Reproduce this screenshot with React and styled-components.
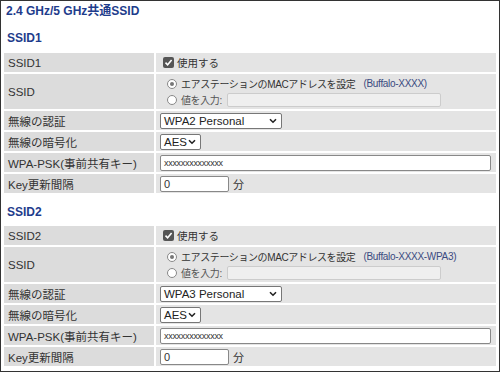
import styled, { createGlobalStyle } from "styled-components";

const Global = createGlobalStyle`
  html, body { margin: 0; padding: 0; background: #fff; }
  body {
    font-family: "Liberation Sans", Arial, "Noto Sans CJK JP", sans-serif;
    font-size: 11px;
    color: #333;
  }
`;

const Frame = styled.div`
  width: 500px;
  height: 372px;
  box-sizing: border-box;
  border: 1px solid #333;
  padding: 0 1px 0 3px;
  overflow: hidden;
`;

const Title = styled.h2`
  margin: 0;
  padding: 3px 0 0 2px;
  height: 24px;
  box-sizing: border-box;
  font-size: 12px;
  line-height: 15px;
  font-weight: bold;
  color: #1e3c8c;
`;

const SubTitle = styled.h3`
  margin: 0;
  padding: ${(p) => p.$top}px 0 0 3px;
  height: ${(p) => p.$h}px;
  box-sizing: border-box;
  font-size: 12px;
  line-height: 15px;
  font-weight: bold;
  color: #1e3c8c;
`;

const Table = styled.table`
  table-layout: fixed;
  border-collapse: separate;
  border-spacing: 2px;
  margin: -2px 0 0 -2px;
  width: calc(100% + 2px);
`;

const Label = styled.th`
  box-sizing: border-box;
  width: 150px;
  background: #dcdcdc;
  text-align: left;
  font-weight: normal;
  font-size: 11.5px;
  padding: 0 4px;
  height: ${(p) => (p.$tall ? 35 : 19)}px;
  color: #333;
  white-space: nowrap;
`;

const Value = styled.td`
  background: #e4e4e4;
  padding: 0 4px;
  font-size: 10.5px;
  height: ${(p) => (p.$tall ? 35 : 19)}px;
  white-space: nowrap;
`;

const CheckRow = styled.label`
  display: flex;
  align-items: center;
  gap: 3px;
  padding-left: 3px;
`;

const CheckBox = styled.span`
  width: 11px;
  height: 11px;
  border-radius: 2px;
  background: #555;
  display: inline-flex;
  align-items: center;
  justify-content: center;
`;

const RadioList = styled.div`
  display: flex;
  flex-direction: column;
  gap: 1px;
  padding-left: 7px;
`;

const RadioRow = styled.label`
  display: flex;
  align-items: center;
  gap: 4px;
  height: 15px;
  font-size: 10px;
  letter-spacing: -0.4px;
  color: ${(p) => (p.$muted ? "#555" : "#333")};
`;

const Radio = styled.span`
  flex: none;
  width: 10px;
  height: 10px;
  border-radius: 50%;
  border: 1px solid #888;
  background: #fff;
  box-sizing: border-box;
  display: inline-flex;
  align-items: center;
  justify-content: center;
  &::after {
    content: "";
    width: 4px;
    height: 4px;
    border-radius: 50%;
    background: ${(p) => (p.$on ? "#777" : "transparent")};
  }
`;

const Note = styled.span`
  color: #3a4a80;
  font-size: 10px;
  letter-spacing: -0.3px;
  margin-left: 4px;
  line-height: 15px;
`;

const ValueInput = styled.span`
  display: inline-flex;
  align-items: center;
  box-sizing: border-box;
  height: ${(p) => p.$h || 16}px;
  width: ${(p) => p.$w}px;
  border: 1px solid ${(p) => (p.$disabled ? "#ccc" : "#888")};
  border-radius: 2px;
  background: ${(p) => (p.$disabled ? "#efefef" : "#fff")};
  padding: 0 3px;
  margin-left: ${(p) => p.$ml || 0}px;
  font-size: ${(p) => (p.$small ? 9 : 11)}px;
  color: #333;
  letter-spacing: ${(p) => (p.$small ? "-0.3px" : "0")};
`;

const Select = styled.span`
  display: inline-flex;
  align-items: center;
  justify-content: space-between;
  box-sizing: border-box;
  height: 16px;
  width: ${(p) => p.$w}px;
  border: 1px solid #777;
  border-radius: 2px;
  background: #fff;
  padding: 0 4px 0 3px;
  font-size: 11.5px;
  color: #222;
`;

const Unit = styled.span`
  margin-left: 4px;
  font-size: 11px;
`;

const InlineRow = styled.div`
  display: flex;
  align-items: center;
`;

const Check = () => (
  <CheckBox>
    <svg width="9" height="9" viewBox="0 0 9 9">
      <path d="M1.5 4.6 L3.6 6.7 L7.6 2" stroke="#fff" strokeWidth="1.6" fill="none" />
    </svg>
  </CheckBox>
);

const Chevron = () => (
  <svg width="8" height="6" viewBox="0 0 8 6">
    <path d="M1 1.2 L4 4.2 L7 1.2" stroke="#222" strokeWidth="1.6" fill="none" />
  </svg>
);

const SsidTable = ({ name, note, auth }) => (
  <Table>
    <tbody>
      <tr>
        <Label>{name}</Label>
        <Value>
          <CheckRow>
            <Check />
            使用する
          </CheckRow>
        </Value>
      </tr>
      <tr>
        <Label $tall>SSID</Label>
        <Value $tall>
          <RadioList>
            <RadioRow>
              <Radio $on />
              エアステーションのMACアドレスを設定
              <Note>{note}</Note>
            </RadioRow>
            <RadioRow $muted>
              <Radio />
              値を入力:
              <ValueInput $w={214} $h={14} $ml={1} $disabled />
            </RadioRow>
          </RadioList>
        </Value>
      </tr>
      <tr>
        <Label>無線の認証</Label>
        <Value>
          <Select $w={122}>
            {auth}
            <Chevron />
          </Select>
        </Value>
      </tr>
      <tr>
        <Label>無線の暗号化</Label>
        <Value>
          <Select $w={41}>
            AES
            <Chevron />
          </Select>
        </Value>
      </tr>
      <tr>
        <Label>WPA-PSK(事前共有キー)</Label>
        <Value>
          <ValueInput $w={331} $small>
            xxxxxxxxxxxxxx
          </ValueInput>
        </Value>
      </tr>
      <tr>
        <Label>Key更新間隔</Label>
        <Value>
          <InlineRow>
            <ValueInput $w={69}>0</ValueInput>
            <Unit>分</Unit>
          </InlineRow>
        </Value>
      </tr>
    </tbody>
  </Table>
);

export default function App() {
  return (
    <>
      <Global />
      <Frame>
        <Title>2.4 GHz/5 GHz共通SSID</Title>
        <SubTitle $top={6} $h={28}>SSID1</SubTitle>
        <SsidTable name="SSID1" note="(Buffalo-XXXX)" auth="WPA2 Personal" />
        <SubTitle $top={10} $h={31}>SSID2</SubTitle>
        <SsidTable name="SSID2" note="(Buffalo-XXXX-WPA3)" auth="WPA3 Personal" />
      </Frame>
    </>
  );
}
